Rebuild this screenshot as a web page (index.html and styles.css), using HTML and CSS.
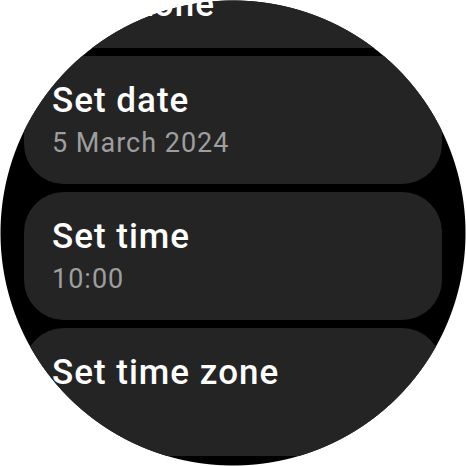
FILE: index.html
```html
<!DOCTYPE html>
<html lang="en">
<head>
<meta charset="utf-8">
<title>Date &amp; time</title>
<link rel="stylesheet" href="styles.css">
</head>
<body>
<div class="screen">
  <div class="list">
    <div class="card">
      <div class="title title-wrap">Automatic time zone</div>
    </div>
    <div class="card">
      <div class="title">Set date</div>
      <div class="subtitle">5 March 2024</div>
    </div>
    <div class="card">
      <div class="title">Set time</div>
      <div class="subtitle">10:00</div>
    </div>
    <div class="card">
      <div class="title">Set time zone</div>
    </div>
  </div>
</div>
</body>
</html>
```
FILE: styles.css
```css
html, body {
  margin: 0;
  padding: 0;
  background: #ffffff;
}

.screen {
  width: 466px;
  height: 466px;
  overflow: hidden;
  background: radial-gradient(circle 233px at 233px 233px, #000000 232px, #ffffff 233px);
  font-family: Roboto, "Noto Sans", sans-serif;
}

.list {
  display: flex;
  flex-direction: column;
  gap: 8px;
  padding: 0 24px;
  margin-top: -80px;
}

.card {
  box-sizing: border-box;
  height: 128px;
  border-radius: 40px;
  padding: 25px 28px 0 28px;
  background: radial-gradient(circle 233px at 233px 233px, #242424 232px, rgba(36,36,36,0) 233px) fixed;
}

.title {
  color: #ffffff;
  font-size: 35px;
  font-weight: 500;
  line-height: 40px;
  letter-spacing: 1px;
}

.title-wrap {
  max-width: 200px;
}

.subtitle {
  margin-top: 6px;
  color: #9e9e9e;
  font-size: 27px;
  font-weight: 400;
  line-height: 32px;
  letter-spacing: 1px;
}
```
